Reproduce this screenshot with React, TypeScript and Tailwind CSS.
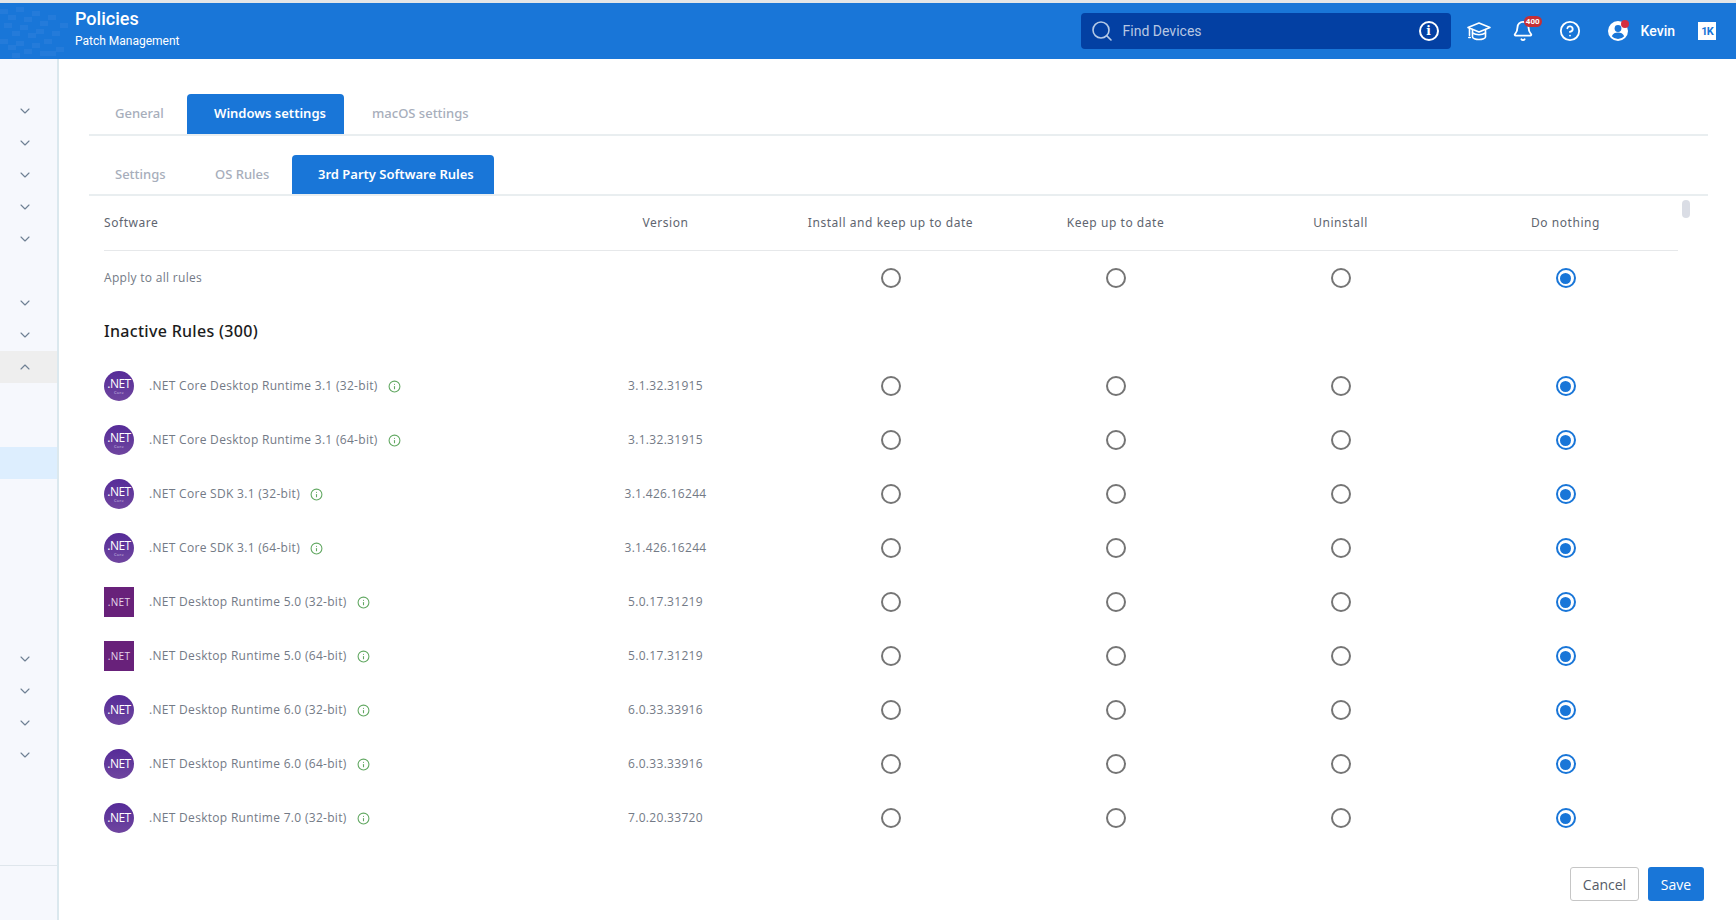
import { Bell, ChevronDown, ChevronUp, CircleHelp, Info, Search } from 'lucide-react';

const rows = [
  { name: '.NET Core Desktop Runtime 3.1 (32-bit)', version: '3.1.32.31915', logo: 'core' },
  { name: '.NET Core Desktop Runtime 3.1 (64-bit)', version: '3.1.32.31915', logo: 'core' },
  { name: '.NET Core SDK 3.1 (32-bit)', version: '3.1.426.16244', logo: 'core' },
  { name: '.NET Core SDK 3.1 (64-bit)', version: '3.1.426.16244', logo: 'core' },
  { name: '.NET Desktop Runtime 5.0 (32-bit)', version: '5.0.17.31219', logo: 'square' },
  { name: '.NET Desktop Runtime 5.0 (64-bit)', version: '5.0.17.31219', logo: 'square' },
  { name: '.NET Desktop Runtime 6.0 (32-bit)', version: '6.0.33.33916', logo: 'circle' },
  { name: '.NET Desktop Runtime 6.0 (64-bit)', version: '6.0.33.33916', logo: 'circle' },
  { name: '.NET Desktop Runtime 7.0 (32-bit)', version: '7.0.20.33720', logo: 'circle' },
];

function Radio({ checked = false }: { checked?: boolean }) {
  if (checked) {
    return (
      <div className="w-5 h-5 rounded-full border-2 border-[#1976d8] flex items-center justify-center">
        <div className="w-[11px] h-[11px] rounded-full bg-[#1976d8]" />
      </div>
    );
  }
  return <div className="w-5 h-5 rounded-full border-2 border-[#757575]" />;
}

function RadioCells() {
  return (
    <>
      <div className="flex justify-center"><Radio /></div>
      <div className="flex justify-center"><Radio /></div>
      <div className="flex justify-center"><Radio /></div>
      <div className="flex justify-center"><Radio checked /></div>
    </>
  );
}

function NetLogo({ kind }: { kind: string }) {
  if (kind === 'square') {
    return (
      <div className="w-[30px] h-[30px] shrink-0 bg-[#68217a] flex items-center justify-center text-[10px] text-[#e4d5ea] font-['Open_Sans',sans-serif]">
        .NET
      </div>
    );
  }
  return (
    <div className="w-[30px] h-[30px] shrink-0 rounded-full bg-gradient-to-b from-[#562b98] to-[#6f459f] flex flex-col items-center justify-center text-white font-['Open_Sans',sans-serif] leading-none">
      <span className="text-[12px] leading-[12px] tracking-[-0.5px]">.NET</span>
      {kind === 'core' && <span className="text-[4px] leading-[5px] text-[#d9cdea]">Core</span>}
    </div>
  );
}

function HeaderTexture() {
  const cells = [
    [0, 6], [8, 12], [16, 4], [24, 14], [32, 8], [40, 18], [48, 12], [4, 20], [12, 28], [20, 22],
    [28, 30], [36, 26], [44, 36], [52, 28], [0, 36], [8, 42], [16, 38], [24, 46], [32, 40], [40, 48],
    [60, 20], [56, 44], [48, 48], [12, 50],
  ];
  return (
    <svg className="absolute left-0 top-0" width="70" height="56">
      {cells.map(([x, y]) => (
        <rect key={`${x}-${y}`} x={x} y={y} width="8" height="5" fill="#2d7fdc" opacity="0.55" />
      ))}
    </svg>
  );
}

function CapIcon() {
  return (
    <svg width="26" height="26" viewBox="0 0 26 26" fill="none" stroke="#fff" strokeWidth="1.6" strokeLinejoin="round" strokeLinecap="round">
      <path d="M2 9.5 13 5l11 4.5L13 14z" />
      <path d="M6.5 11.5V19c0 1.2 3 2.5 6.5 2.5s6.5-1.3 6.5-2.5v-7.5" />
      <path d="M6.5 15c2 1.2 4 1.7 6.5 1.7s4.500-.5 6.500-1.700" />
      <path d="M3.500 10.500v7M2.800 19.500h1.500" />
    </svg>
  );
}

function UserIcon() {
  return (
    <div className="relative w-5 h-5">
      <svg width="20" height="20" viewBox="0 0 20 20">
        <circle cx="10" cy="10" r="10" fill="#fff" />
        <circle cx="10" cy="7.5" r="3.4" fill="#1976d8" />
        <path d="M3.8 15.2c1.2-2.6 3.4-3.6 6.2-3.6s5 1 6.2 3.6A8.2 8.2 0 0 1 10 18a8.2 8.2 0 0 1-6.2-2.8z" fill="#1976d8" />
      </svg>
      <div className="absolute -top-[1px] -right-[1px] w-2 h-2 rounded-full bg-[#d32f3f]" />
    </div>
  );
}

function SideChevron() {
  return (
    <div className="h-8 pl-[17px] flex items-center">
      <ChevronDown size={16} strokeWidth={1.7} />
    </div>
  );
}

export default function App() {
  return (
    <div className="h-[920px] w-[1736px] overflow-hidden bg-white flex flex-col font-['Open_Sans',sans-serif]">
      <div className="h-[3px] bg-[#e4e6e8]" />

      {/* Header */}
      <header className="relative h-[56px] bg-[#1976d8] flex items-center text-white font-['Roboto',sans-serif]">
        <HeaderTexture />
        <div className="relative ml-[75px] pb-[5px] flex flex-col">
          <span className="text-[18px] leading-[20px] font-medium">Policies</span>
          <span className="text-[12px] leading-[16px] mt-[4px]">Patch Management</span>
        </div>
        <div className="ml-auto w-[370px] h-[36px] rounded-[4px] bg-[#0340a3] flex items-center pl-[9px] pr-[12px]">
          <Search size={24} strokeWidth={1.6} className="text-[#b4c9e6]" />
          <span className="ml-[9px] text-[14px] text-[#b7c7e2]">Find Devices</span>
          <div className="ml-auto w-5 h-5 rounded-full border-2 border-white flex items-center justify-center">
            <span className="text-[12px] leading-none font-bold font-['DejaVu_Serif',serif]">i</span>
          </div>
        </div>
        <div className="ml-[15px]"><CapIcon /></div>
        <div className="relative ml-[20px] w-[22px] h-[22px]">
          <Bell size={22} strokeWidth={2} />
          <div className="absolute -top-[4px] -right-[8px] h-[11px] px-[2px] rounded-full bg-[#c62f35] text-[8px] leading-[11px] font-bold">400</div>
        </div>
        <CircleHelp size={22} strokeWidth={2} className="ml-[25px]" />
        <div className="ml-[27px]"><UserIcon /></div>
        <span className="ml-[13px] text-[14px] font-medium">Kevin</span>
        <div className="ml-[23px] mr-[20px] w-[18px] h-[18px] bg-white flex items-center justify-center text-[#1976d8] text-[11px] leading-none font-bold tracking-[-1px]">
          1K
        </div>
      </header>

      <div className="flex flex-1 min-h-0">
        {/* Sidebar */}
        <aside className="w-[59px] shrink-0 bg-[#f6f8fd] border-r-2 border-[#dbe8ee] flex flex-col text-[#6f8094]">
          <div className="h-[36px]" />
          {[0, 1, 2, 3, 4].map((i) => <SideChevron key={i} />)}
          <div className="h-[32px]" />
          {[0, 1].map((i) => <SideChevron key={i} />)}
          <div className="h-8 pl-[17px] flex items-center bg-[#eeeeee]"><ChevronUp size={16} strokeWidth={1.7} /></div>
          <div className="h-[64px]" />
          <div className="h-8 bg-[#ddeefe]" />
          <div className="h-[164px]" />
          {[0, 1, 2, 3].map((i) => <SideChevron key={i} />)}
          <div className="h-[94px]" />
          <div className="border-t border-[#dfe6ec]" />
        </aside>

        {/* Main */}
        <main className="flex-1 min-w-0 pl-[30px] pr-[28px] pt-[35px] flex flex-col">
          <div className="flex h-[42px] border-b-2 border-[#e9eef0] text-[13px] font-['Noto_Sans',sans-serif] font-medium text-[#a7aebb]">
            <div className="w-[98px] pl-[26px] flex items-center">General</div>
            <div className="w-[157px] pl-[27px] flex items-center bg-[#1976d8] text-white font-semibold rounded-t-[4px]">Windows settings</div>
            <div className="pl-[28px] flex items-center">macOS settings</div>
          </div>

          <div className="mt-[19px] flex h-[41px] border-b-2 border-[#e9eef0] text-[13px] font-['Noto_Sans',sans-serif] font-medium text-[#a7aebb]">
            <div className="w-[100px] pl-[26px] flex items-center">Settings</div>
            <div className="w-[103px] pl-[26px] flex items-center">OS Rules</div>
            <div className="w-[202px] pl-[26px] flex items-center bg-[#1976d8] text-white font-semibold rounded-t-[4px]">3rd Party Software Rules</div>
          </div>

          {/* Table */}
          <div className="relative pl-[15px] pr-[30px]">
            <div className="absolute right-[18px] top-[4px] w-2 h-[18px] rounded-full bg-[#dadde5]" />

            <div className="grid grid-cols-[1fr_repeat(5,225px)] items-center h-[55px] border-b border-[#e6e8ea] text-[12px] tracking-[0.55px] text-[#60656f] font-['Noto_Sans',sans-serif]">
              <div>Software</div>
              <div className="text-center">Version</div>
              <div className="text-center">Install and keep up to date</div>
              <div className="text-center">Keep up to date</div>
              <div className="text-center">Uninstall</div>
              <div className="text-center">Do nothing</div>
            </div>

            <div className="grid grid-cols-[1fr_repeat(5,225px)] items-center h-[54px] text-[12px] tracking-[0.3px] text-[#737a86]">
              <div>Apply to all rules</div>
              <div />
              <RadioCells />
            </div>

            <div className="h-[54px] pb-[3px] flex items-center text-[16px] font-medium tracking-[0.3px] text-[#1c1c1c] font-['Noto_Sans',sans-serif]">
              Inactive Rules (300)
            </div>

            {rows.map((row) => (
              <div key={row.name} className="grid grid-cols-[1fr_repeat(5,225px)] items-center h-[54px] text-[12px] tracking-[0.3px] text-[#737a86]">
                <div className="flex items-center">
                  <NetLogo kind={row.logo} />
                  <span className="ml-[15px]">{row.name}</span>
                  <Info size={13} strokeWidth={2} className="ml-[10px] text-[#62a862]" />
                </div>
                <div className="text-center">{row.version}</div>
                <RadioCells />
              </div>
            ))}
          </div>

          <div className="mt-[22px] flex justify-end gap-[9px] pr-[4px] text-[14px]">
            <button className="w-[69px] h-[34px] rounded-[3px] border border-[#c6c6c6] bg-white text-[#555b66]">Cancel</button>
            <button className="w-[56px] h-[34px] rounded-[3px] bg-[#1976d8] text-white">Save</button>
          </div>
        </main>
      </div>
    </div>
  );
}
